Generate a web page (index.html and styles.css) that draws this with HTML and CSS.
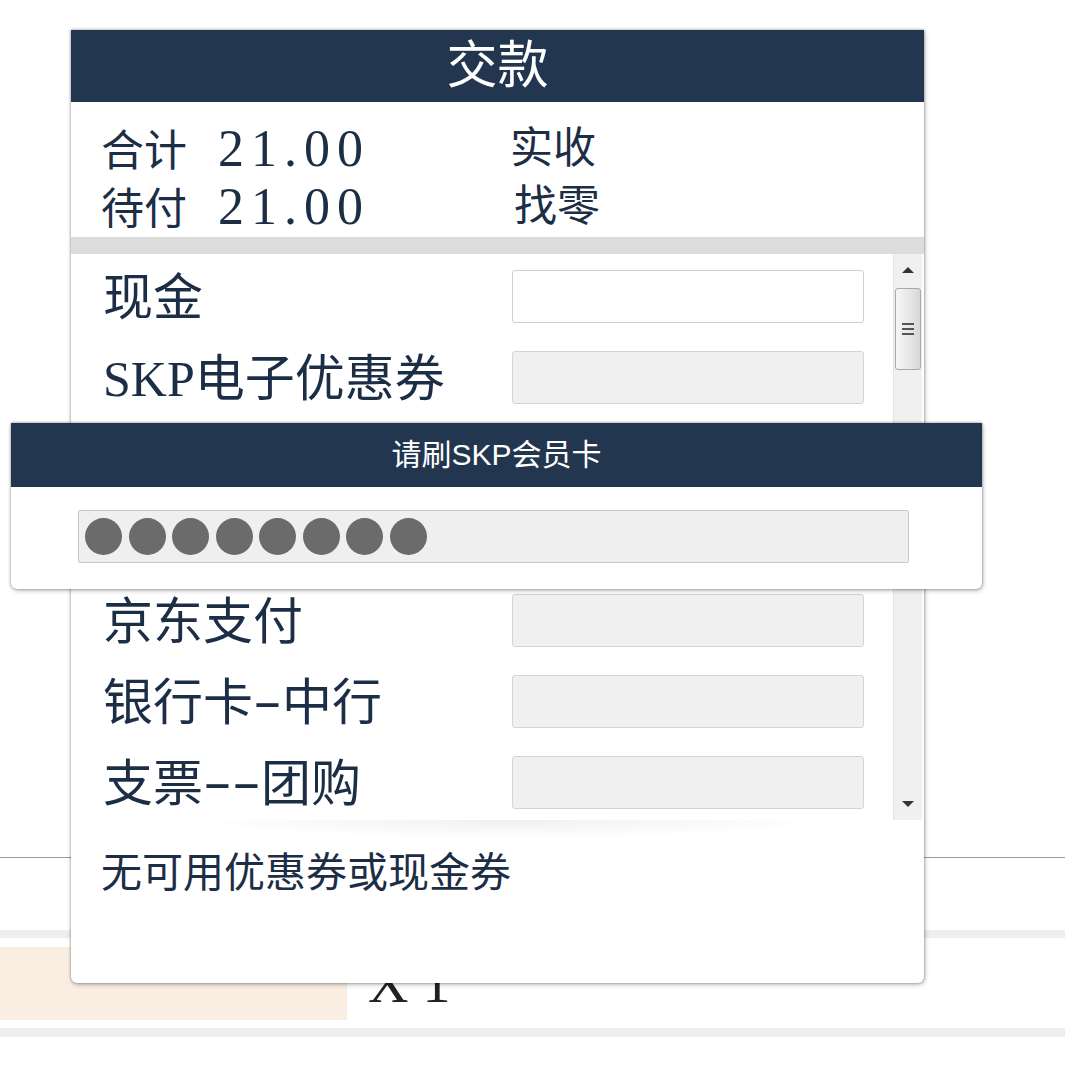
FILE: index.html
```html
<!DOCTYPE html>
<html lang="zh-CN">
<head>
<meta charset="utf-8">
<title>交款</title>
<link rel="stylesheet" href="styles.css">
</head>
<body>
<div class="page">
  <div class="page-top"></div>
  <div class="rule"></div>
  <div class="band"></div>
  <div class="item-row">
    <div class="item-cell"></div>
    <div class="item-qty">X 1</div>
  </div>
  <div class="band band-b"></div>
</div>

<section class="dialog">
  <header class="dlg-head">交款</header>
  <div class="totals">
    <div class="tcol">
      <div class="trow"><span>合计</span><span class="num">21.00</span></div>
      <div class="trow"><span>待付</span><span class="num">21.00</span></div>
    </div>
    <div class="tcol">
      <div class="trow">实收</div>
      <div class="trow shift">找零</div>
    </div>
  </div>
  <div class="sep"></div>
  <div class="pay-area">
    <div class="pay-list">
      <div class="pay-row"><span class="pay-label">现金</span><span class="pay-input active"></span></div>
      <div class="pay-row"><span class="pay-label">SKP电子优惠券</span><span class="pay-input"></span></div>
      <div class="pay-row"><span class="pay-label">SKP会员卡</span><span class="pay-input"></span></div>
      <div class="pay-row"><span class="pay-label">微信支付</span><span class="pay-input"></span></div>
      <div class="pay-row"><span class="pay-label">京东支付</span><span class="pay-input"></span></div>
      <div class="pay-row"><span class="pay-label">银行卡<span class="hy">-</span>中行</span><span class="pay-input"></span></div>
      <div class="pay-row"><span class="pay-label">支票<span class="hy">-</span><span class="hy">-</span>团购</span><span class="pay-input"></span></div>
    </div>
    <div class="scrollbar">
      <div class="sb-btn"><span class="tri-up"></span></div>
      <div class="sb-thumb"><span class="grip"></span><span class="grip"></span><span class="grip"></span></div>
      <div class="sb-track"></div>
      <div class="sb-btn"><span class="tri-down"></span></div>
    </div>
  </div>
  <div class="footer">无可用优惠券或现金券</div>
</section>

<section class="popup">
  <header class="pop-head">请刷SKP会员卡</header>
  <div class="pop-body">
    <div class="pwd">
      <span class="dot"></span><span class="dot"></span><span class="dot"></span><span class="dot"></span>
      <span class="dot"></span><span class="dot"></span><span class="dot"></span><span class="dot"></span>
    </div>
  </div>
</section>
</body>
</html>
```

FILE: styles.css
```css
* { box-sizing: border-box; }
html, body { margin: 0; padding: 0; }
body {
  width: 1065px;
  height: 1072px;
  background: #fff;
  font-family: "Liberation Serif", "Noto Sans CJK SC", serif;
  color: #1c2e45;
  position: relative;
  overflow: hidden;
}

/* background page */
.page { display: flex; flex-direction: column; }
.page-top { height: 857px; }
.rule { height: 1px; background: #9c9c9c; margin-bottom: 72px; }
.band { height: 8px; background: #eeeeee; }
.band-b { height: 9px; }
.item-row { display: flex; height: 73px; margin: 9px 0 8px; }
.item-cell { width: 347px; background: #faeee2; }
.item-qty { padding-left: 21px; font-size: 56px; line-height: 73px; color: #222; white-space: pre; }

/* main dialog */
.dialog {
  position: absolute;
  left: 71px;
  top: 30px;
  width: 853px;
  height: 953px;
  background: #fff;
  border-radius: 0 0 6px 6px;
  box-shadow: 0 0 3px rgba(0,0,0,.45), 1px 2px 5px rgba(0,0,0,.2);
  display: flex;
  flex-direction: column;
  overflow: hidden;
}
.dlg-head {
  height: 72px;
  background: #22364f;
  color: #fff;
  font-size: 51px;
  line-height: 72px;
  text-align: center;
}
.totals {
  height: 135px;
  padding: 18px 0 0 30px;
  display: flex;
  font-size: 43px;
  line-height: 58px;
}
.tcol { width: 409px; }
.trow { height: 58px; white-space: nowrap; }
.num { font-size: 52px; letter-spacing: 7px; margin-left: 31px; }
.shift { padding-left: 4px; }
.sep { height: 17px; background: #dcdcdc; }

.pay-area { height: 566px; display: flex; padding-right: 2px; }
.pay-list {
  width: 822px;
  overflow: hidden;
  padding-top: 16px;
  display: flex;
  flex-direction: column;
  gap: 28px;
}
.pay-row { display: flex; align-items: center; height: 53px; flex-shrink: 0; }
.pay-label {
  width: 441px;
  padding-left: 32px;
  font-size: 50px;
  line-height: 53px;
  white-space: nowrap;
  padding-top: 4px;
}
.hy { display: inline-block; width: 29px; text-align: center; transform: translateY(-3px) scaleX(1.7); }
.pay-input {
  width: 352px;
  height: 53px;
  background: #f0f0f0;
  border: 1px solid #d4d4d4;
  border-radius: 3px;
}
.pay-input.active { background: #fff; border-color: #cfcfcf; }

.scrollbar {
  width: 29px;
  background: #f0f0f0;
  border-left: 1px solid #e4e4e4;
  display: flex;
  flex-direction: column;
  align-items: center;
}
.sb-btn { height: 32px; width: 100%; display: flex; align-items: center; justify-content: center; }
.tri-up { width: 0; height: 0; border-left: 6px solid transparent; border-right: 6px solid transparent; border-bottom: 6px solid #333; }
.tri-down { width: 0; height: 0; border-left: 6px solid transparent; border-right: 6px solid transparent; border-top: 6px solid #333; }
.sb-thumb {
  margin-top: 2px;
  width: 26px;
  height: 82px;
  border: 1px solid #a9a9a9;
  border-radius: 3px;
  background: linear-gradient(to right, #f6f6f6, #e6e6e6 60%, #d6d6d6);
  display: flex;
  flex-direction: column;
  align-items: center;
  justify-content: center;
  gap: 3px;
}
.grip { width: 12px; height: 2px; background: #555; }
.sb-track { flex: 1; }

.footer {
  flex: 1;
  padding: 30px 0 0 30px;
  font-size: 41px;
  line-height: 46px;
  white-space: nowrap;
  background: radial-gradient(ellipse 320px 18px at 440px 0, rgba(0,0,0,.06), rgba(0,0,0,0));
}

/* card swipe popup */
.popup {
  position: absolute;
  left: 11px;
  top: 423px;
  width: 971px;
  height: 166px;
  background: #fff;
  border-radius: 0 0 6px 6px;
  box-shadow: 0 0 3px rgba(0,0,0,.45), 1px 2px 5px rgba(0,0,0,.2);
  display: flex;
  flex-direction: column;
  overflow: hidden;
}
.pop-head {
  height: 64px;
  background: #22364f;
  color: #fff;
  font-family: "Liberation Sans", "Noto Sans CJK SC", sans-serif;
  font-size: 30px;
  line-height: 64px;
  text-align: center;
}
.pop-body { flex: 1; padding: 23px 0 0 67px; }
.pwd {
  width: 831px;
  height: 53px;
  background: #efefef;
  border: 1px solid #c8c8c8;
  border-radius: 2px;
  display: flex;
  align-items: center;
  gap: 6.5px;
  padding-left: 6px;
}
.dot { width: 37px; height: 37px; border-radius: 50%; background: #6b6b6b; }
```
